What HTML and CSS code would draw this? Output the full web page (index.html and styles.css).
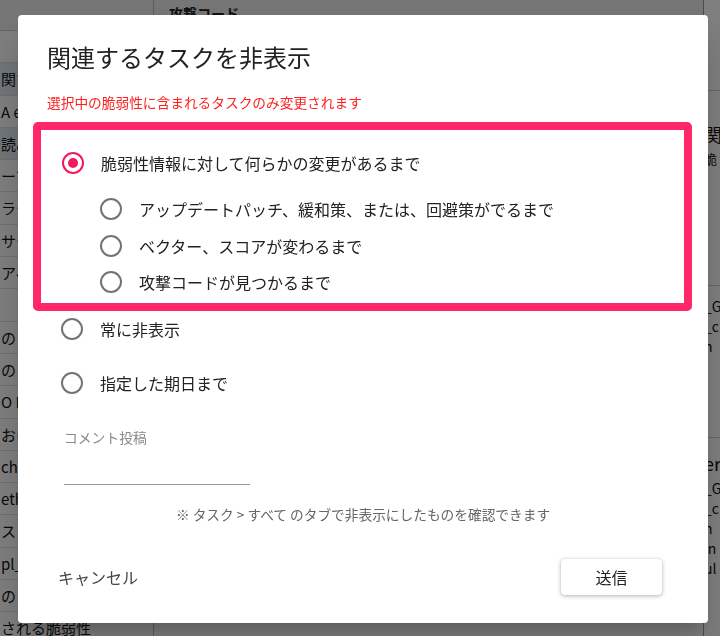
FILE: index.html
```html
<!DOCTYPE html>
<html lang="ja">
  <head>
    <meta charset="UTF-8" />
    <meta name="viewport" content="width=device-width, initial-scale=1.0" />
    <title>関連するタスクを非表示</title>
    <link rel="stylesheet" href="styles.css">
  </head>
  <body>
    <div class="page">
      <aside class="list">
        <div class="list-head"></div>
        <div class="list-row"></div>
        <div class="list-row active">関す</div>
        <div class="list-row">A e</div>
        <div class="list-row active">読み</div>
        <div class="list-row">ーフ</div>
        <div class="list-row">ラー</div>
        <div class="list-row">サー</div>
        <div class="list-row">アベ</div>
        <div class="list-row"></div>
        <div class="list-row">の</div>
        <div class="list-row">の</div>
        <div class="list-row">O R</div>
        <div class="list-row">おけ</div>
        <div class="list-row">che</div>
        <div class="list-row">eth</div>
        <div class="list-row">スク</div>
        <div class="list-row">pl_</div>
        <div class="list-row">の</div>
        <div class="list-row last">される脆弱性</div>
      </aside>
      <main class="detail">
        <div class="detail-head">攻撃コード</div>
      </main>
      <section class="side">
        <div class="side-card">
          <div class="side-title">関</div>
          <div class="side-sub">脆</div>
        </div>
        <div class="side-card code">
          <div>_G</div>
          <div>_c</div>
          <div>n</div>
        </div>
        <div class="side-card code tight">
          <div class="side-title">er</div>
          <div>_G</div>
          <div>_c</div>
          <div>n</div>
          <div>in</div>
          <div>ul</div>
        </div>
      </section>
    </div>

    <div class="backdrop">
      <div class="dialog">
        <h2 class="dialog-title">関連するタスクを非表示</h2>
        <p class="notice">選択中の脆弱性に含まれるタスクのみ変更されます</p>

        <div class="highlight">
          <label class="option">
            <svg class="radio" viewBox="0 0 24 24"><circle cx="12" cy="12" r="10" fill="none" stroke="#f21a5c" stroke-width="2"/><circle cx="12" cy="12" r="5" fill="#f21a5c"/></svg>
            <span>脆弱性情報に対して何らかの変更があるまで</span>
          </label>
          <div class="sub-options">
            <label class="option">
              <svg class="radio" viewBox="0 0 24 24"><circle cx="12" cy="12" r="10" fill="none" stroke="#737373" stroke-width="2"/></svg>
              <span>アップデートパッチ、緩和策、または、回避策がでるまで</span>
            </label>
            <label class="option">
              <svg class="radio" viewBox="0 0 24 24"><circle cx="12" cy="12" r="10" fill="none" stroke="#737373" stroke-width="2"/></svg>
              <span>ベクター、スコアが変わるまで</span>
            </label>
            <label class="option">
              <svg class="radio" viewBox="0 0 24 24"><circle cx="12" cy="12" r="10" fill="none" stroke="#737373" stroke-width="2"/></svg>
              <span>攻撃コードが見つかるまで</span>
            </label>
          </div>
        </div>

        <div class="options">
          <label class="option">
            <svg class="radio" viewBox="0 0 24 24"><circle cx="12" cy="12" r="10" fill="none" stroke="#737373" stroke-width="2"/></svg>
            <span>常に非表示</span>
          </label>
          <label class="option">
            <svg class="radio" viewBox="0 0 24 24"><circle cx="12" cy="12" r="10" fill="none" stroke="#737373" stroke-width="2"/></svg>
            <span>指定した期日まで</span>
          </label>
        </div>

        <div class="comment">
          <div class="comment-label">コメント投稿</div>
          <div class="comment-input"></div>
        </div>

        <p class="hint">※ タスク &gt; すべて のタブで非表示にしたものを確認できます</p>

        <div class="actions">
          <button class="btn-cancel">キャンセル</button>
          <button class="btn-submit">送信</button>
        </div>
      </div>
    </div>
  </body>
</html>
```

FILE: styles.css
```css
html,
body {
  height: 100%;
  margin: 0;
}
body {
  font-family: "Noto Sans CJK JP", "Liberation Sans", sans-serif;
  background: #fff;
  color: #222;
  overflow: hidden;
}

/* page behind the dialog */
.page {
  display: flex;
  height: 100%;
}
.list {
  width: 153px;
  flex-shrink: 0;
  border-right: 1px solid #bbb;
}
.list-head {
  height: 30px;
  background: #ececec;
  border-bottom: 1px solid #d0d0d0;
}
.list-row {
  height: 31.3px;
  line-height: 31px;
  font-size: 15px;
  color: #111;
  white-space: nowrap;
  border-bottom: 1px solid #ddd;
  padding-left: 1px;
}
.list-row.active {
  background: #e2ecf7;
}
.list-row.last {
  border-bottom: none;
}
.detail {
  flex: 1;
}
.detail-head {
  height: 30px;
  background: #ececec;
  border-bottom: 1px solid #d0d0d0;
  font-size: 14px;
  font-weight: bold;
  line-height: 26px;
  padding-left: 15px;
  color: #222;
}
.side {
  width: 16px;
  flex-shrink: 0;
  padding-top: 90px;
  border-left: 1px solid #999;
}
.side-card {
  border-top: 1px solid #ccc;
  padding: 28px 0 0 0;
  font-size: 14px;
  line-height: 20px;
  white-space: nowrap;
  color: #111;
}
.side-card.code {
  margin-top: 56px;
  padding-top: 10px;
  height: 130px;
}
.side-card.tight {
  margin-top: 11px;
}
.side-title {
  font-size: 18px;
  line-height: 30px;
}
.side-sub {
  font-size: 13px;
  height: 80px;
}

/* dialog */
.backdrop {
  position: fixed;
  inset: 0;
  background: rgba(0, 0, 0, 0.5);
  padding: 15px 0 0 18px;
}
.dialog {
  width: 690px;
  box-sizing: border-box;
  background: #fff;
  border-radius: 4px;
  box-shadow: 0 11px 15px -7px rgba(0, 0, 0, 0.2), 0 24px 38px 3px rgba(0, 0, 0, 0.14);
  padding: 26px 0 28px;
}
.dialog-title {
  margin: 0;
  padding: 0 29px;
  font-size: 24px;
  font-weight: normal;
  line-height: 32px;
  color: #222;
}
.notice {
  margin: 19px 0 0;
  padding: 0 29px;
  font-size: 13.7px;
  line-height: 20px;
  color: #ff2020;
}
.highlight {
  margin: 10px 16px 0 15px;
  border: 8px solid #ff2768;
  border-radius: 5px;
  padding: 15px 0 2px 20px;
}
.option {
  display: flex;
  align-items: center;
  height: 36px;
  font-size: 16px;
  color: #222;
}
.radio {
  width: 24px;
  height: 24px;
  margin-right: 16px;
  flex-shrink: 0;
}
.sub-options {
  margin-top: 10px;
  padding-left: 38px;
}
.sub-options .option {
  height: 36.5px;
}
.options {
  padding-left: 42px;
  display: flex;
  flex-direction: column;
  gap: 18px;
}
.comment {
  margin-top: 26px;
  padding-left: 46px;
}
.comment-label {
  font-size: 13.8px;
  line-height: 20px;
  color: #8a8a8a;
}
.comment-input {
  width: 186px;
  height: 37px;
  border-bottom: 1px solid #9a9a9a;
}
.hint {
  margin: 19px 0 0;
  text-align: center;
  font-size: 13.7px;
  line-height: 20px;
  color: #666;
}
.actions {
  margin-top: 35px;
  display: flex;
  justify-content: space-between;
  align-items: center;
  padding: 0 46px 0 40px;
}
.btn-cancel {
  border: none;
  background: none;
  padding: 0;
  font-family: inherit;
  font-size: 16px;
  color: #444;
}
.btn-submit {
  width: 101px;
  height: 36px;
  border: none;
  border-radius: 4px;
  background: #fff;
  font-family: inherit;
  font-size: 16px;
  color: #222;
  box-shadow: 0 1px 4px rgba(0, 0, 0, 0.3), 0 0 1px rgba(0, 0, 0, 0.15);
}
```
